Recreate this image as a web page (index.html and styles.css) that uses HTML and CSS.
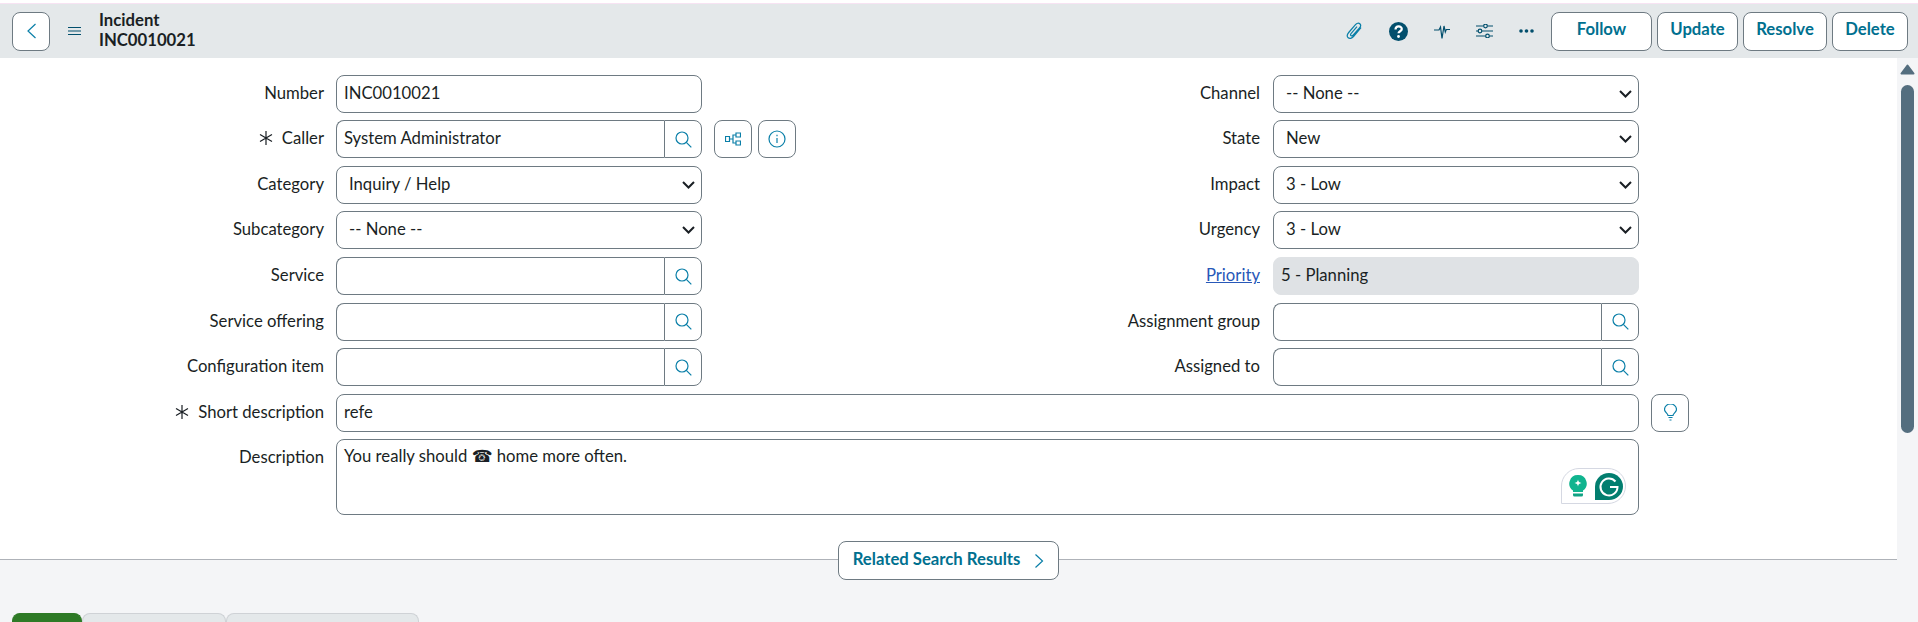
FILE: index.html
```html
<!DOCTYPE html>
<html>
<head>
<title>INC0010021 | Incident</title>
<link rel="stylesheet" href="styles.css">
</head>
<body>
<div class="topline"></div>
<div class="header">
  <button class="btn back-btn"><svg width="11" height="16" viewBox="0 0 11 16"><path d="M9.5 1 2 8l7.5 7" class="stroke-blue"/></svg></button>
  <svg class="menu-icon" width="13" height="8" viewBox="0 0 13 8"><path d="M0 .5h13M0 4h13M0 7.500h13" class="stroke-teal"/></svg>
  <div class="title">
    <div>Incident</div>
    <div>INC0010021</div>
  </div>
  <div class="header-icons">
    <svg width="17" height="18" viewBox="0 0 17 18"><path d="M15 5.500 7.500 14.500c-1.700 2-4 2.500-5.300 1.300C.9 14.600 1 12.500 2.700 10.500L9.500 2.600c1.300-1.500 3.200-1.900 4.300-.9 1.100 1 1 2.800-.3 4.300L7.300 13c-.8.900-1.800 1.100-2.400.6-.6-.5-.4-1.500.3-2.300L11 4.600" class="stroke-blue"/></svg>
    <svg width="19" height="19" viewBox="0 0 19 19"><circle cx="9.500" cy="9.500" r="9.500" fill="#024f6d"/><path d="M6.500 7.500C6.500 3.500 12.800 3.500 12.800 7c0 2.200-3.300 2.200-3.300 4.300" fill="none" stroke="#fff" stroke-width="2.200"/><circle cx="9.500" cy="14.500" r="1.400" fill="#fff"/></svg>
    <svg width="16" height="16" viewBox="0 0 16 16"><path d="M0 7h5l1.500-3 1.500 11.500L10 3l1.300 6 1-2.500H16" class="stroke-teal"/></svg>
    <svg width="17" height="14" viewBox="0 0 17 14"><path d="M0 2h7.500M11.500 2H17M0 7h2M6 7h11M0 12h9.500M13.500 12H17" class="stroke-teal"/><circle cx="9.500" cy="2" r="1.800" class="stroke-teal"/><circle cx="4" cy="7" r="1.800" class="stroke-teal"/><circle cx="11.500" cy="12" r="1.800" class="stroke-teal"/></svg>
    <svg width="15" height="4" viewBox="0 0 15 4"><circle cx="2" cy="2" r="1.800" fill="#024f6d"/><circle cx="7.500" cy="2" r="1.800" fill="#024f6d"/><circle cx="13" cy="2" r="1.800" fill="#024f6d"/></svg>
  </div>
  <div class="actions">
    <button class="btn action follow">Follow</button>
    <button class="btn action update">Update</button>
    <button class="btn action resolve">Resolve</button>
    <button class="btn action delete">Delete</button>
  </div>
</div>

<div class="main">
  <div class="page">
    <div class="form">
      <div class="row">
        <div class="field">
          <label class="label">Number</label>
          <input class="input" value="INC0010021">
        </div>
        <div class="field">
          <label class="label">Channel</label>
          <select class="input pick"><option>-- None --</option></select>
        </div>
      </div>
      <div class="row">
        <div class="field">
          <label class="label"><svg class="req" width="14" height="14" viewBox="0 0 14 14"><path d="M7 0v14M1 3.500l12 7M13 3.500l-12 7" class="stroke-dark"/></svg>Caller</label>
          <div class="lookup">
            <input class="input" value="System Administrator">
            <button class="search"><svg width="17" height="17" viewBox="0 0 17 17"><circle cx="7" cy="7" r="6" class="stroke-blue"/><path d="m11.300 11.300 5 5" class="stroke-blue"/></svg></button>
          </div>
          <button class="btn side-btn first"><svg width="16" height="16" viewBox="0 0 16 16"><path d="M.5 5.500h4v5h-4zM11 2h4.500v4H11zM11 10h4.500v4H11zM4.500 8H8M11 4H8v8h3" class="stroke-blue"/></svg></button>
          <button class="btn side-btn"><svg width="18" height="18" viewBox="0 0 18 18"><circle cx="9" cy="9" r="8" class="stroke-blue"/><path d="M9 8v5M9 4.800v1.400" class="stroke-blue"/></svg></button>
        </div>
        <div class="field">
          <label class="label">State</label>
          <select class="input pick"><option>New</option></select>
        </div>
      </div>
      <div class="row">
        <div class="field">
          <label class="label">Category</label>
          <select class="input pick"><option>Inquiry / Help</option></select>
        </div>
        <div class="field">
          <label class="label">Impact</label>
          <select class="input pick"><option>3 - Low</option></select>
        </div>
      </div>
      <div class="row">
        <div class="field">
          <label class="label">Subcategory</label>
          <select class="input pick"><option>-- None --</option></select>
        </div>
        <div class="field">
          <label class="label">Urgency</label>
          <select class="input pick"><option>3 - Low</option></select>
        </div>
      </div>
      <div class="row">
        <div class="field">
          <label class="label">Service</label>
          <div class="lookup">
            <input class="input">
            <button class="search"><svg width="17" height="17" viewBox="0 0 17 17"><circle cx="7" cy="7" r="6" class="stroke-blue"/><path d="m11.300 11.300 5 5" class="stroke-blue"/></svg></button>
          </div>
        </div>
        <div class="field">
          <label class="label"><a class="link" href="#">Priority</a></label>
          <input class="input readonly" value="5 - Planning" readonly>
        </div>
      </div>
      <div class="row">
        <div class="field">
          <label class="label">Service offering</label>
          <div class="lookup">
            <input class="input">
            <button class="search"><svg width="17" height="17" viewBox="0 0 17 17"><circle cx="7" cy="7" r="6" class="stroke-blue"/><path d="m11.300 11.300 5 5" class="stroke-blue"/></svg></button>
          </div>
        </div>
        <div class="field">
          <label class="label">Assignment group</label>
          <div class="lookup">
            <input class="input">
            <button class="search"><svg width="17" height="17" viewBox="0 0 17 17"><circle cx="7" cy="7" r="6" class="stroke-blue"/><path d="m11.300 11.300 5 5" class="stroke-blue"/></svg></button>
          </div>
        </div>
      </div>
      <div class="row">
        <div class="field">
          <label class="label">Configuration item</label>
          <div class="lookup">
            <input class="input">
            <button class="search"><svg width="17" height="17" viewBox="0 0 17 17"><circle cx="7" cy="7" r="6" class="stroke-blue"/><path d="m11.300 11.300 5 5" class="stroke-blue"/></svg></button>
          </div>
        </div>
        <div class="field">
          <label class="label">Assigned to</label>
          <div class="lookup">
            <input class="input">
            <button class="search"><svg width="17" height="17" viewBox="0 0 17 17"><circle cx="7" cy="7" r="6" class="stroke-blue"/><path d="m11.300 11.300 5 5" class="stroke-blue"/></svg></button>
          </div>
        </div>
      </div>
      <div class="row">
        <div class="field wide">
          <label class="label"><svg class="req" width="14" height="14" viewBox="0 0 14 14"><path d="M7 0v14M1 3.500l12 7M13 3.500l-12 7" class="stroke-dark"/></svg>Short description</label>
          <input class="input wide-input" value="refe">
          <button class="btn side-btn first"><svg width="13" height="17" viewBox="0 0 13 17"><path d="M4 11.500c0-2-3.500-3.500-3.500-6a6 5.500 0 0 1 12 0c0 2.500-3.500 4-3.500 6zM4.500 13.500h4M5.500 16h2" class="stroke-blue"/></svg></button>
        </div>
      </div>
      <div class="row">
        <div class="field wide">
          <label class="label">Description</label>
          <div class="desc-wrap">
            <textarea class="input desc">You really should ☎ home more often.</textarea>
            <div class="grammarly">
              <svg width="18" height="24" viewBox="0 0 18 24"><path d="M9 1a8.500 8.500 0 0 0-5 15.500V18h10v-1.500A8.500 8.500 0 0 0 9 1z" fill="#10b48f"/><path d="M9 5.500c.4 2.200 1.300 3.100 3.500 3.500-2.200.4-3.100 1.300-3.500 3.500-.4-2.200-1.300-3.100-3.500-3.500 2.200-.4 3.100-1.300 3.500-3.500z" fill="#fff"/><path d="M4 19.500h10V21a1.500 1.500 0 0 1-1.500 1.500h-7A1.500 1.500 0 0 1 4 21z" fill="#10a283"/></svg>
              <svg width="28" height="27" viewBox="0 0 28 27"><path d="M14 0a14 13.500 0 0 1 0 27H0V14A14 14 0 0 1 14 0z" fill="#027e6f"/><path d="M20.500 8.500A8.500 8.500 0 1 0 22.500 14H15" fill="none" stroke="#fff" stroke-width="2"/></svg>
            </div>
          </div>
        </div>
      </div>
    </div>

    <div class="lower">
      <button class="btn related">Related Search Results<svg width="10" height="16" viewBox="0 0 10 16"><path d="m1.500 1.500 7 6.500-7 6.500" class="stroke-blue"/></svg></button>
      <div class="tabs">
        <div class="tab tab-active"></div>
        <div class="tab tab-two"></div>
        <div class="tab tab-three"></div>
      </div>
    </div>
  </div>

  <div class="scrollbar">
    <svg class="arrow" width="15" height="11" viewBox="0 0 15 11"><path d="M7.500 1.500 1.500 9.500h12z" fill="#546e7f" stroke="#546e7f" stroke-width="2" stroke-linejoin="round"/></svg>
    <div class="thumb"></div>
  </div>
</div>
</body>
</html>
```

FILE: styles.css
```css
html, body {
  height: 622px;
  overflow: hidden;
}

body {
  margin: 0;
  font-family: Lato, "DejaVu Sans", sans-serif;
  font-size: 16.7px;
  color: #1a1f24;
  background-color: #fff;
}

button, input, select, textarea {
  font-family: inherit;
  font-size: inherit;
  color: inherit;
}

svg {
  display: block;
  flex-shrink: 0;
}

.stroke-blue {
  fill: none;
  stroke: #0a7fa8;
  stroke-width: 1.2;
}

.stroke-teal {
  fill: none;
  stroke: #024f6d;
  stroke-width: 1.2;
}

.stroke-dark {
  fill: none;
  stroke: #1a1f24;
  stroke-width: 1.2;
}

.topline {
  height: 4px;
  box-sizing: border-box;
  border-top: 2px solid #fff;
  border-bottom: 1px solid #f7e3f3;
}

.btn {
  background-color: #fff;
  border: 1px solid #6e7a82;
  border-radius: 8px;
  padding: 0;
  height: 38px;
  display: flex;
  align-items: center;
  justify-content: center;
}

.header {
  height: 54px;
  padding-left: 12px;
  display: flex;
  align-items: center;
  background-color: #e4e8ea;
}

.back-btn {
  width: 38px;
  height: 39px;
}

.menu-icon {
  margin-left: 18px;
}

.title {
  margin-left: 18px;
  font-weight: bold;
  line-height: 20px;
  margin-top: -2px;
}

.header-icons {
  margin-left: auto;
  display: flex;
  align-items: center;
  gap: 26px;
}

.actions {
  margin-left: 17px;
  margin-right: 10px;
  display: flex;
  gap: 5px;
}

.action {
  height: 39px;
  padding-bottom: 4px;
  font-weight: bold;
  color: #00708f;
}

.follow { width: 101px; }
.update { width: 81px; }
.resolve { width: 84px; }
.delete { width: 76px; }

.main {
  display: flex;
  height: 564px;
}

.page {
  flex: 1;
  min-width: 0;
  display: flex;
  flex-direction: column;
}

.form {
  height: 501px;
  flex-shrink: 0;
  box-sizing: border-box;
  padding-top: 16.7px;
}

.row {
  display: flex;
  margin-bottom: 7.6px;
}

.field {
  width: 936px;
  display: flex;
  align-items: flex-start;
}

.field + .field .label {
  margin-right: 13px;
}

.wide {
  width: auto;
}

.label {
  width: 324px;
  margin-right: 12px;
  line-height: 36px;
  flex-shrink: 0;
  display: flex;
  justify-content: flex-end;
  align-items: center;
}

.req {
  margin-right: 9px;
}

.link {
  color: #2858b8;
}

.input {
  box-sizing: border-box;
  width: 366px;
  height: 38px;
  border: 1px solid #6e7a82;
  border-radius: 8px;
  padding: 0 7px 2px;
  background-color: #fff;
  outline: none;
}

.pick {
  appearance: none;
  padding-left: 12px;
  background: #fff url("data:image/svg+xml,%3Csvg xmlns='http://www.w3.org/2000/svg' width='13' height='8' viewBox='0 0 13 8'%3E%3Cpath d='M1 1l5.500 5.500L12 1' fill='none' stroke='%231a1f24' stroke-width='2'/%3E%3C/svg%3E") no-repeat right 6px center;
}

.readonly {
  background-color: #dfe2e5;
  border-color: #dfe2e5;
}

.lookup {
  display: flex;
  width: 366px;
}

.lookup .input {
  width: 328px;
  border-radius: 8px 0 0 8px;
  border-right: none;
}

.search {
  width: 38px;
  height: 38px;
  box-sizing: border-box;
  padding: 0;
  background-color: #fff;
  border: 1px solid #6e7a82;
  border-radius: 0 8px 8px 0;
  display: flex;
  align-items: center;
  justify-content: center;
}

.side-btn {
  width: 38px;
  margin-left: 6px;
}

.side-btn.first {
  margin-left: 12px;
}

.wide-input {
  width: 1303px;
}

.desc-wrap {
  position: relative;
  width: 1303px;
}

.desc {
  display: block;
  width: 100%;
  height: 76px;
  padding: 5px 7px;
  resize: none;
  line-height: 22px;
}

.grammarly {
  position: absolute;
  top: 29px;
  right: 13px;
  width: 65px;
  height: 36px;
  box-sizing: border-box;
  padding-left: 7px;
  display: flex;
  align-items: center;
  gap: 8px;
  background-color: #fff;
  border: 1px solid #d5d8e2;
  border-radius: 18px 18px 18px 0;
}

.lower {
  flex: 1;
  min-height: 0;
  border-top: 1px solid #aeb2b8;
  background-color: #f4f5f7;
}

.related {
  margin: -19px auto 0;
  width: 221px;
  height: 39px;
  padding-bottom: 4px;
  gap: 14px;
  font-weight: bold;
  color: #00708f;
}

.related svg {
  margin-top: 4px;
}

.tabs {
  margin-top: 33px;
  padding-left: 12px;
  display: flex;
}

.tab {
  height: 12px;
  box-sizing: border-box;
  background-color: #e4e8ea;
  border: 1px solid #cfd2d6;
  border-bottom: none;
  border-radius: 8px 8px 0 0;
}

.tab-active {
  width: 70px;
  background-color: #2e7a26;
  border-color: #2e7a26;
}

.tab-two { width: 144px; }
.tab-three { width: 193px; }

.scrollbar {
  width: 21px;
  flex-shrink: 0;
  background-color: #f4f5f7;
  display: flex;
  flex-direction: column;
  align-items: center;
}

.arrow {
  margin-top: 6px;
}

.thumb {
  margin-top: 10px;
  width: 13px;
  height: 348px;
  border-radius: 7px;
  background-color: #546e7f;
}
```
